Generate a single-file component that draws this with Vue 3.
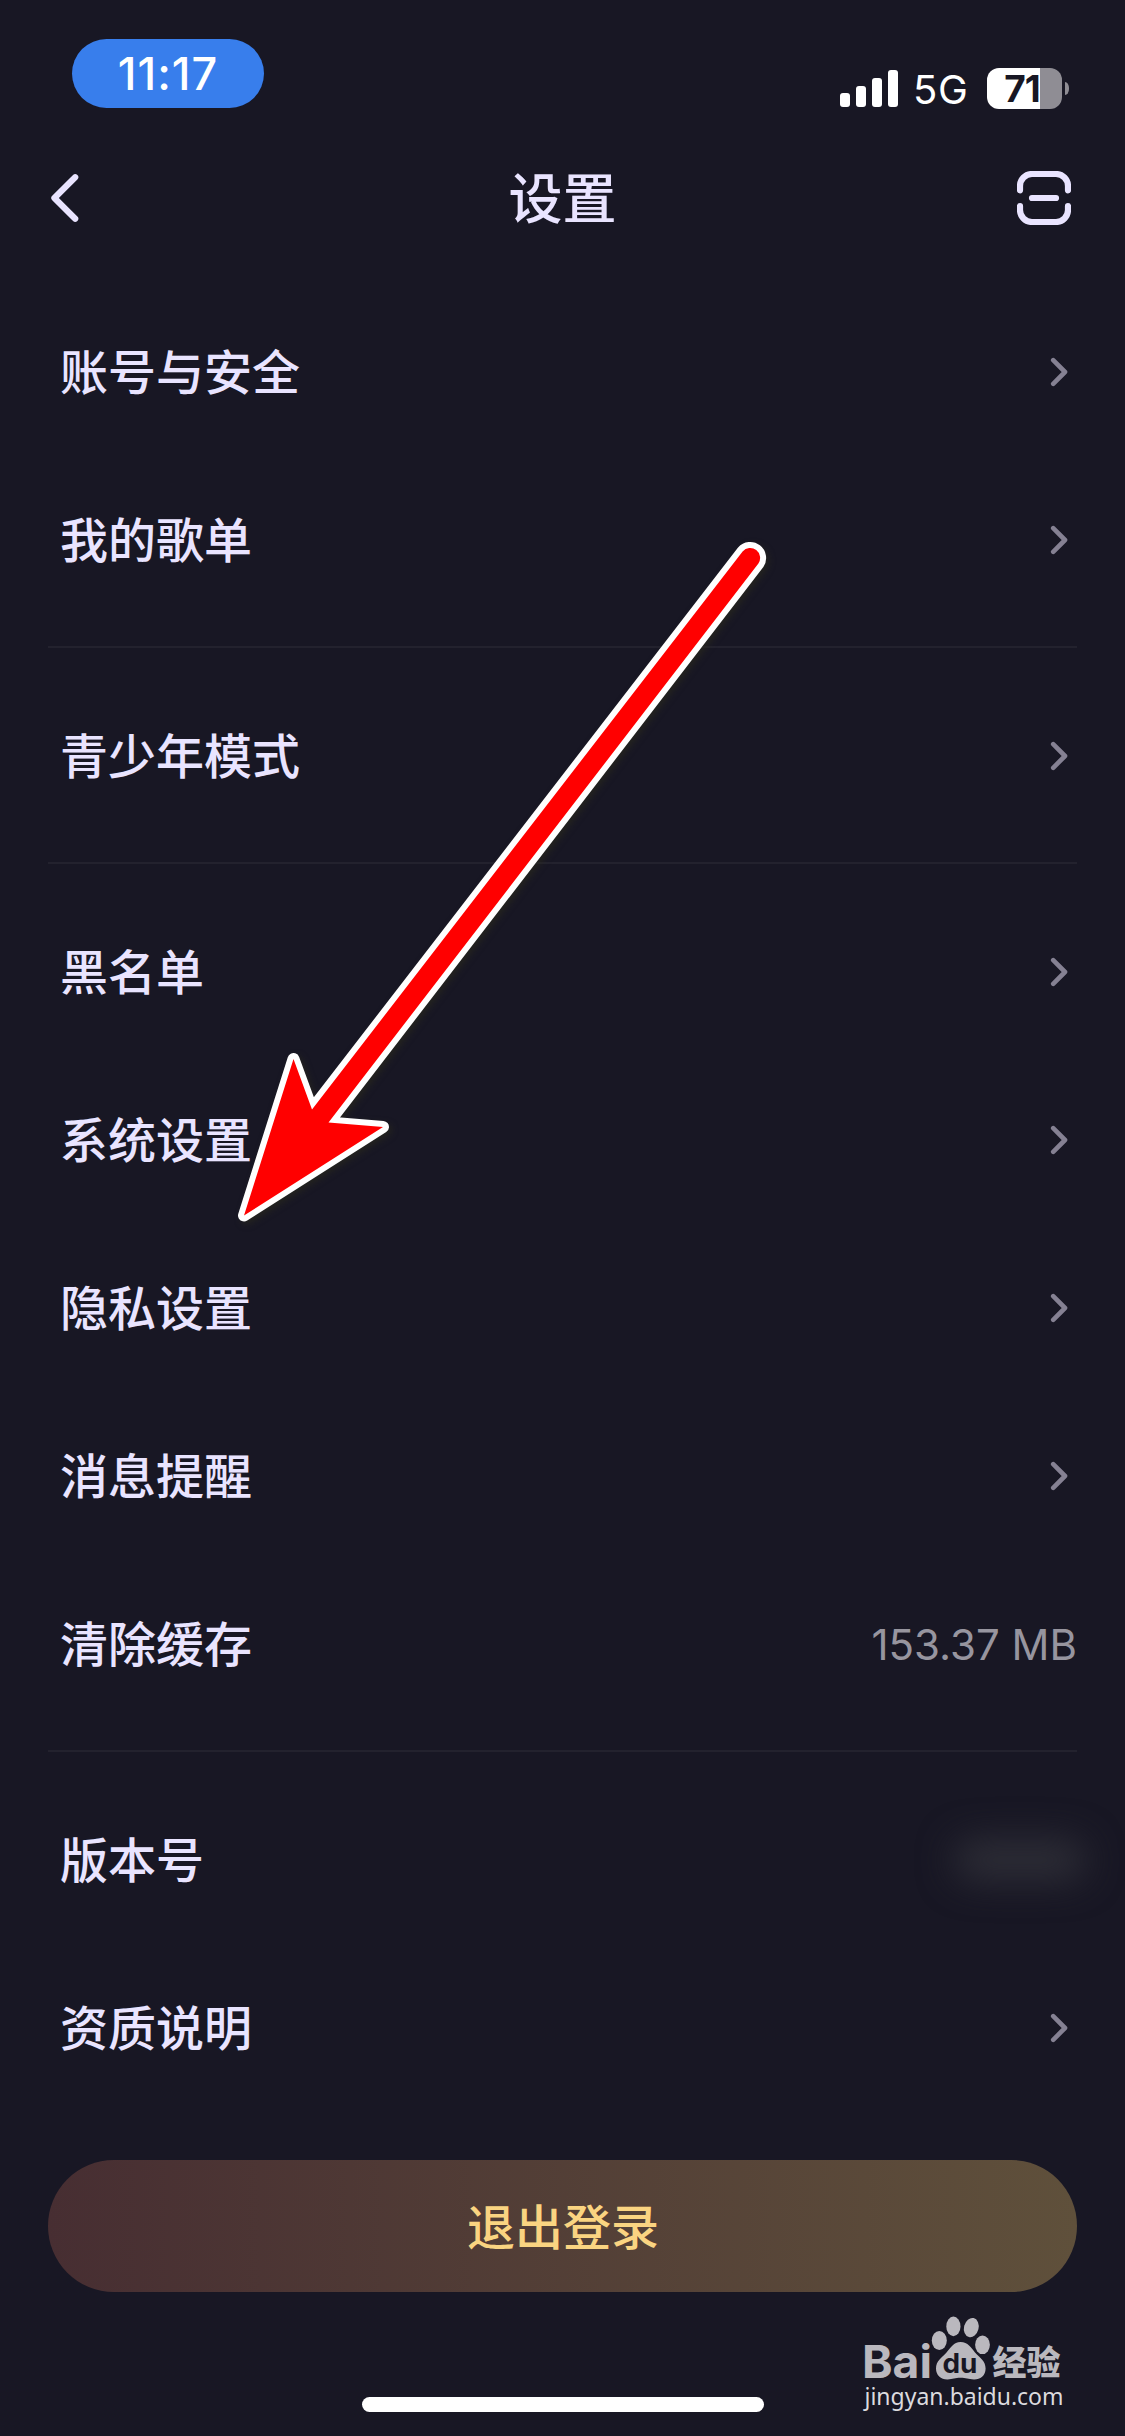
<script setup>
const groups = [
  [{ label: '账号与安全' }, { label: '我的歌单' }],
  [{ label: '青少年模式' }],
  [
    { label: '黑名单' },
    { label: '系统设置' },
    { label: '隐私设置' },
    { label: '消息提醒' },
    { label: '清除缓存', value: '153.37 MB' },
  ],
  [{ label: '版本号', hidden: true }, { label: '资质说明' }],
]
</script>

<template>
  <div class="screen">
    <header class="status">
      <div class="time"><span>11:17</span></div>
      <div class="indicators">
        <svg class="signal" width="58" height="37" viewBox="0 0 58 37" fill="#fff">
          <rect x="0" y="23" width="10" height="14" rx="3" />
          <rect x="16" y="16" width="10" height="21" rx="3" />
          <rect x="32" y="8" width="10" height="29" rx="3" />
          <rect x="48" y="0" width="10" height="37" rx="3" />
        </svg>
        <span class="network">5G</span>
        <div class="battery"><span>71</span></div>
        <i class="nub"></i>
      </div>
    </header>

    <nav class="nav">
      <svg class="back" width="30" height="50" viewBox="0 0 30 50">
        <path d="M26.2 4.2 5.400 25l20.8 20.8" />
      </svg>
      <h1>设置</h1>
      <svg class="scan" width="54" height="54" viewBox="0 0 54 54">
        <path d="M3 19.3V15A12 12 0 0 1 15 3H39A12 12 0 0 1 51 15V19.3M3 35.2V39A12 12 0 0 0 15 51H39A12 12 0 0 0 51 39V35.2M15 27H39" />
      </svg>
    </nav>

    <main class="list">
      <section v-for="(group, i) in groups" :key="i" class="group">
        <div v-for="row in group" :key="row.label" class="row">
          <span class="label">{{ row.label }}</span>
          <span v-if="row.value" class="value">{{ row.value }}</span>
          <i v-else-if="row.hidden" class="smudge"></i>
          <svg v-else class="chevron" width="18" height="30" viewBox="0 0 18 30">
            <path d="M3.2 3.2 15 15 3.2 26.8" />
          </svg>
        </div>
      </section>
    </main>

    <button class="logout">退出登录</button>
    <div class="home"></div>

    <svg class="arrow" width="580" height="720" viewBox="220 520 580 720">
      <path d="M244 1215.5 293.5 1059 312 1109.5 742.6 551.4A10 10 0 0 1 758.4 563.6L328.5 1122.5 383 1127Z" />
    </svg>

    <svg class="brand" width="220" height="110" viewBox="855 2310 220 110">
      <g class="mark">
        <text x="862" y="2378" font-size="45" textLength="70" lengthAdjust="spacingAndGlyphs" class="latin">Bai</text>
        <ellipse cx="939.3" cy="2340.5" rx="7.5" ry="9.6" />
        <ellipse cx="953.4" cy="2326.4" rx="7.1" ry="9.8" />
        <ellipse cx="971.3" cy="2327.6" rx="7.3" ry="9.8" transform="rotate(14 971.3 2327.6)" />
        <ellipse cx="982.5" cy="2344.8" rx="7.4" ry="9.3" />
        <path d="M960.5 2342C968 2342 971 2347.5 975 2352.5C980 2358 985.6 2361 985.6 2368.5C985.6 2376 980 2379.5 974 2379.4C968 2379.3 966 2377.8 960.5 2377.8C955 2377.8 953 2379.3 947.5 2379.4C941 2379.5 936 2375.5 936 2368.5C936 2361 941.5 2358 946.5 2352.5C951 2347.5 953.5 2342 960.5 2342Z" />
        <text x="942.5" y="2373" font-size="26.5" textLength="35" lengthAdjust="spacingAndGlyphs" class="du">du</text>
        <text x="992.5" y="2374.5" font-size="34" textLength="68" lengthAdjust="spacingAndGlyphs" class="cn">经验</text>
      </g>
      <text x="864.5" y="2404.5" font-size="23.5" textLength="199" lengthAdjust="spacingAndGlyphs" class="site">jingyan.baidu.com</text>
    </svg>
  </div>
</template>

<style>
body {
  background: #181724;
}
</style>

<style scoped>
.screen {
  position: relative;
  width: 1125px;
  height: 2436px;
  overflow: hidden;
  background: #181724;
  color: #e9e4ff;
  font-family: Inter, "Noto Sans CJK SC", sans-serif;
  display: flex;
  flex-direction: column;
}
.status {
  height: 132px;
  display: flex;
  justify-content: space-between;
  align-items: flex-start;
  padding: 0 56px 0 72px;
  box-sizing: border-box;
  color: #fff;
}
.time {
  margin-top: 39px;
  width: 192px;
  height: 69px;
  border-radius: 35px;
  background: #387eec;
  display: flex;
  align-items: center;
  justify-content: center;
  font-size: 45px;
  font-weight: 500;
  letter-spacing: 1px;
  line-height: 69px;
}
.indicators {
  margin-top: 68px;
  height: 41px;
  display: flex;
  align-items: center;
}
.network {
  width: 56px;
  margin-left: 15px;
  padding-top: 2px;
  font-size: 40px;
  letter-spacing: 0.8px;
  line-height: 41px;
  white-space: nowrap;
}
.battery {
  width: 75px;
  height: 41px;
  margin-left: 18px;
  border-radius: 12px;
  background: linear-gradient(90deg, #fff 53px, #8f8d94 53px);
  color: #181724;
  font-size: 37px;
  font-weight: 700;
  letter-spacing: -1px;
  line-height: 41px;
  text-indent: -5px;
  text-align: center;
}
.nub {
  width: 4px;
  height: 13px;
  margin-left: 3px;
  border-radius: 0 4px 4px 0 / 0 6px 6px 0;
  background: #8f8d94;
}
.nav {
  height: 132px;
  display: flex;
  align-items: center;
  justify-content: space-between;
  padding: 0 54px 0 49px;
}
.nav svg,
.chevron {
  fill: none;
  stroke: #e9e4ff;
  stroke-width: 6.2;
  stroke-linecap: round;
  stroke-linejoin: round;
}
.nav .back {
  margin-right: 29px;
}
.nav h1 {
  margin: 0;
  padding-top: 3px;
  font-size: 54px;
  font-weight: 500;
  line-height: 80px;
}
.list {
  padding: 24px 48px 0;
}
.group + .group {
  padding-top: 22px;
}
.group + .group::before {
  content: "";
  display: block;
  height: 2px;
  margin-bottom: 24px;
  background: #23222e;
}
.row {
  height: 168px;
  display: flex;
  align-items: center;
  justify-content: space-between;
  padding-left: 12px;
}
.label {
  padding-top: 2px;
  font-size: 48px;
  font-weight: 500;
  line-height: 72px;
}
.chevron {
  margin-right: 9.5px;
  stroke: #858193;
  stroke-width: 4.6;
}
.value {
  padding-top: 1px;
  color: #97959f;
  font-size: 42px;
  font-weight: 400;
}
.smudge {
  width: 132px;
  height: 40px;
  margin-right: -9px;
  border-radius: 20px;
  background: #2e2e37;
  filter: blur(18px);
}
.logout {
  height: 132px;
  margin: 48px 48px 0;
  padding: 0 0 4px 1px;
  border: 0;
  border-radius: 66px;
  background: linear-gradient(90deg, #472e32, #5f503b);
  color: #fad481;
  font: 500 48px/128px "Noto Sans CJK SC", sans-serif;
}
.home {
  width: 402px;
  height: 15px;
  margin: 105px auto 0;
  border-radius: 8px;
  background: #fff;
}
.arrow {
  position: absolute;
  left: 220px;
  top: 520px;
  fill: #f00;
  stroke: #fff;
  stroke-width: 12;
  stroke-linejoin: round;
  paint-order: stroke;
  filter: drop-shadow(3px 3px 3px rgba(45, 45, 25, 0.5));
}
.brand {
  position: absolute;
  left: 855px;
  top: 2310px;
}
.mark {
  fill: #bab8be;
}
.latin,
.du {
  font-family: Inter, sans-serif;
  font-weight: 700;
}
.mark .du {
  fill: #181724;
}
.cn {
  font-family: "Noto Sans CJK SC", sans-serif;
  font-weight: 900;
}
.site {
  fill: #dcdbdf;
  font-family: "Noto Sans", sans-serif;
}
</style>
